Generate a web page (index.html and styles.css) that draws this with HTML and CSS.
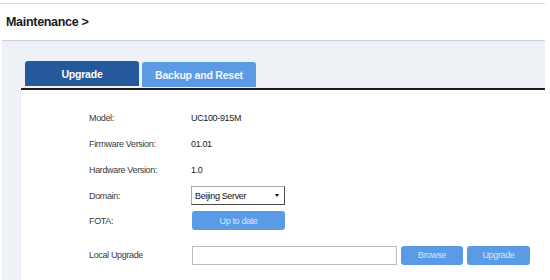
FILE: index.html
```html
<!DOCTYPE html>
<html>
<head>
<meta charset="utf-8">
<link rel="stylesheet" href="styles.css">
</head>
<body>
<div class="topline"></div>
<h1 class="title">Maintenance &gt;</h1>
<section class="section">
  <div class="tabs">
    <div class="tab tab-active">Upgrade</div>
    <div class="tab tab-idle">Backup and Reset</div>
  </div>
  <div class="panel">
    <div class="row"><span class="label">Model:</span><span class="value">UC100-915M</span></div>
    <div class="row"><span class="label">Firmware Version:</span><span class="value">01.01</span></div>
    <div class="row"><span class="label">Hardware Version:</span><span class="value">1.0</span></div>
    <div class="row row-short"><span class="label">Domain:</span>
      <span class="select-wrap"><select class="select"><option>Beijing Server</option></select><span class="arrow"></span></span>
    </div>
    <div class="row row-short"><span class="label">FOTA:</span><button class="btn btn-wide">Up to date</button></div>
    <div class="row row-local"><span class="label">Local Upgrade</span>
      <input class="file" type="text">
      <button class="btn btn-small">Browse</button>
      <button class="btn btn-small">Upgrade</button>
    </div>
  </div>
</section>
</body>
</html>
```
FILE: styles.css
```css
* { box-sizing: border-box; }
body {
  margin: 0;
  width: 550px;
  height: 280px;
  overflow: hidden;
  background: #ffffff;
  font-family: "Liberation Sans", Arial, sans-serif;
  color: #333333;
}
.topline {
  margin: 3px 0 0 0;
  width: 545px;
  height: 1px;
  background: #dedede;
}
.title {
  margin: 0;
  padding: 11px 0 0 6px;
  height: 36px;
  font-size: 12.5px;
  letter-spacing: -0.3px;
  font-weight: bold;
  color: #1a1a1a;
}
.section {
  margin-left: 2px;
  width: 543px;
  height: 240px;
  background: #eef1f5;
  border-top: 1px solid #cdd3da;
  padding: 20px 0 0 19px;
}
.tabs {
  display: flex;
  gap: 3px;
  margin-left: 4px;
  align-items: flex-start;
}
.tab {
  width: 114px;
  height: 25px;
  border-radius: 3px 3px 0 0;
  color: #ffffff;
  font-size: 10.5px;
  letter-spacing: -0.2px;
  font-weight: bold;
  display: flex;
  align-items: center;
  justify-content: center;
}
.tab-active { background: #245a9b; }
.tab-idle { background: #5b9be6; margin-top: 1px; color: #f4f8fd; }
.panel {
  margin-top: 1px;
  height: 200px;
  background: #ffffff;
  border-top: 2px solid #1c1c1c;
  padding: 15px 0 0 68px;
  font-size: 9px;
  letter-spacing: -0.35px;
}
.row {
  display: flex;
  align-items: center;
  height: 26px;
}
.row-short { height: 25px; }
.row-local { margin-top: 9px; }
.label { width: 102px; color: #3a3a3a; }
.value { color: #222; }
.select-wrap {
  position: relative;
  display: inline-block;
  width: 94px;
  height: 19px;
}
.select {
  appearance: none;
  -webkit-appearance: none;
  width: 94px;
  height: 19px;
  border: 1px solid #a8a8a8;
  border-right-color: #4a4a4a;
  border-bottom-color: #4a4a4a;
  border-radius: 0;
  background: #fff;
  font-family: inherit;
  font-size: 9px;
  letter-spacing: -0.35px;
  color: #111;
  padding: 0 0 0 3px;
}
.arrow {
  position: absolute;
  right: 6px;
  top: 8px;
  border-left: 2.5px solid transparent;
  border-right: 2.5px solid transparent;
  border-top: 3px solid #111;
}
.btn {
  height: 19px;
  border: none;
  border-radius: 3px;
  background: #5b9be6;
  color: #d6e6f8;
  font-family: inherit;
  font-size: 9px;
  letter-spacing: -0.35px;
  padding: 0;
}
.btn-wide { width: 93px; margin-left: 1px; }
.file {
  width: 205px;
  height: 19px;
  margin-left: 1px;
  border: 1px solid #bdbdbd;
  border-radius: 0;
  background: #fff;
}
.btn-small { width: 62px; margin-left: 4px; }
.btn-small + .btn-small { width: 63px; }
```
